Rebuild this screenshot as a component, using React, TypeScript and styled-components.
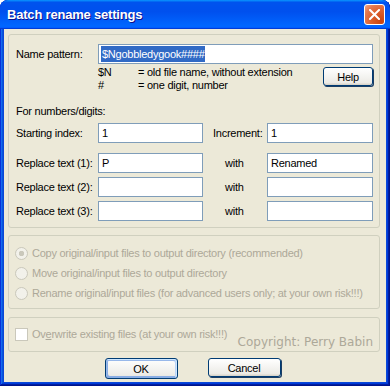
import styled, { createGlobalStyle } from 'styled-components';

const GlobalStyle = createGlobalStyle`
  html, body {
    margin: 0;
    padding: 0;
    background: #ffffff;
  }
  body {
    font-family: Tahoma, "Liberation Sans", Arial, sans-serif;
    font-size: 11px;
    letter-spacing: -0.25px;
    color: #000000;
  }
`;

// Окно диалога целиком
const Window = styled.div`
  box-sizing: border-box;
  width: 390px;
  height: 386px;
  display: flex;
  flex-direction: column;
  background: #0a48d8;
  border-radius: 8px 8px 0 0;
  box-shadow: inset -1px -1px #00138c, inset 1px 1px #0831d9,
    inset -2px -2px #001ea0, inset 2px 2px #166aee,
    inset -3px -3px #003bda, inset 3px 3px #0855dd;
  overflow: hidden;
`;

// Синяя полоса заголовка
const TitleBar = styled.div`
  height: 29px;
  flex-shrink: 0;
  display: flex;
  align-items: center;
  justify-content: space-between;
  padding: 0 5px 0 7px;
  border-radius: 8px 8px 0 0;
  background: linear-gradient(
    180deg,
    #0997ff,
    #0053ee 8%,
    #0050ee 40%,
    #0066ff 88%,
    #0066ff 93%,
    #005bff 95%,
    #003dd7 96%,
    #003dd7
  );
`;

const TitleText = styled.span`
  font-family: "Liberation Sans", Arial, sans-serif;
  font-weight: bold;
  font-size: 13px;
  letter-spacing: -0.2px;
  color: #ffffff;
  text-shadow: 1px 1px #0f1089;
`;

const CloseButton = styled.div`
  width: 21px;
  height: 21px;
  box-sizing: border-box;
  border: 1px solid #ffffff;
  border-radius: 3px;
  background: radial-gradient(
    circle at 85% 85%,
    #c94310 0%,
    #dc5f2c 45%,
    #e67a4f 75%,
    #f2a88a 100%
  );
  display: flex;
  align-items: center;
  justify-content: center;
`;

// Серая клиентская область
const Client = styled.div`
  flex: 1;
  margin: 0 4px 4px 4px;
  background: #ece9d8;
  padding: 5px 6px 0 4px;
  display: flex;
  flex-direction: column;
  white-space: nowrap;
`;

const Group = styled.div<{ $mt?: number; $pad: string }>`
  border: 1px solid #d0d0bf;
  border-radius: 3px;
  margin-top: ${(p) => p.$mt ?? 0}px;
  padding: ${(p) => p.$pad};
  display: flex;
  flex-direction: column;
`;

// Строка сетки: подпись, поле, подпись, поле
const FormRow = styled.div<{ $mt?: number }>`
  display: grid;
  grid-template-columns: 82px 105px 64px 106px;
  align-items: center;
  margin-top: ${(p) => p.$mt ?? 0}px;
`;

const Label = styled.span<{ $indent?: number }>`
  padding-left: ${(p) => p.$indent ?? 0}px;
`;

const TextBox = styled.div<{ $span?: boolean }>`
  box-sizing: border-box;
  height: 20px;
  border: 1px solid #7f9db9;
  background: #ffffff;
  padding: 0 3px;
  display: flex;
  align-items: center;
  overflow: hidden;
  grid-column: ${(p) => (p.$span ? '2 / 5' : 'auto')};
`;

const Selected = styled.span`
  background: #316ac5;
  color: #ffffff;
  line-height: 16px;
  margin-left: -1px;
  padding-left: 1px;
`;

const HintRow = styled.div`
  display: grid;
  grid-template-columns: 82px 1fr auto;
  margin-top: 2px;
  height: 26px;
`;

const HintList = styled.div`
  grid-column: 2;
  display: grid;
  grid-template-columns: 40px auto;
  line-height: 13px;
`;

const SectionNote = styled.div`
  margin-top: 12px;
  line-height: 14px;
`;

const XpButton = styled.button<{ $default?: boolean; $w: number }>`
  box-sizing: border-box;
  width: ${(p) => p.$w}px;
  height: ${(p) => (p.$default ? 21 : 19)}px;
  padding: 0;
  font-family: Tahoma, "Liberation Sans", Arial, sans-serif;
  font-size: 11px;
  letter-spacing: -0.25px;
  color: #000000;
  border: 1px solid #003c74;
  border-radius: 3px;
  background: linear-gradient(180deg, #ffffff, #ecebe6 86%, #d6d0c5);
  box-shadow: ${(p) =>
    p.$default
      ? 'inset -1px 1px #cee7ff, inset 1px 2px #98b8ea, inset -2px 2px #bcd4f6, inset 1px -1px #89ade4, inset 2px -2px #89ade4'
      : '1px 1px 0 #1c3d63'};
`;

const HelpButton = styled(XpButton)`
  margin-top: 1px;
`;

const RadioRow = styled.div`
  height: 20px;
  display: flex;
  align-items: center;
  gap: 4px;
  color: #aca899;
`;

const Radio = styled.span<{ $checked?: boolean }>`
  box-sizing: border-box;
  flex: none;
  width: 13px;
  height: 13px;
  border-radius: 50%;
  border: 1px solid #cac8bb;
  background: ${(p) =>
    p.$checked
      ? 'radial-gradient(circle, #cac8bb 0 2.5px, #f2f1ea 3px)'
      : '#f2f1ea'};
`;

const CheckRow = styled.div`
  display: flex;
  justify-content: space-between;
  height: 24px;
`;

const CheckLabel = styled.div`
  display: flex;
  align-items: center;
  gap: 4px;
  height: 14px;
  color: #aca899;
`;

const CheckBox = styled.span`
  box-sizing: border-box;
  flex: none;
  width: 13px;
  height: 13px;
  border: 1px solid #cac8bb;
  background: #ffffff;
`;

const Copyright = styled.span`
  align-self: flex-end;
  font-family: "DejaVu Sans", Verdana, sans-serif;
  font-size: 12px;
  letter-spacing: 0;
  line-height: 16px;
  color: #aca899;
  margin-bottom: 1px;
`;

const ButtonBar = styled.div`
  margin-top: 6px;
  display: flex;
  justify-content: center;
  gap: 30px;
  padding-right: 3px;
`;

function App() {
  return (
    <>
      <GlobalStyle />
      <Window>
        <TitleBar>
          <TitleText>Batch rename settings</TitleText>
          <CloseButton>
            <svg width="11" height="11" viewBox="0 0 11 11">
              <path d="M1 1 L10 10 M10 1 L1 10" stroke="#ffffff" strokeWidth="2" strokeLinecap="square" />
            </svg>
          </CloseButton>
        </TitleBar>
        <Client>
          <Group $pad="9px 6px 6px 7px">
            <FormRow>
              <Label>Name pattern:</Label>
              <TextBox $span>
                <Selected>$Ngobbledygook####</Selected>
              </TextBox>
            </FormRow>
            <HintRow>
              <HintList>
                <span>$N</span>
                <span>= old file name, without extension</span>
                <span>#</span>
                <span>= one digit, number</span>
              </HintList>
              <HelpButton $w={50}>Help</HelpButton>
            </HintRow>
            <SectionNote>For numbers/digits:</SectionNote>
            <FormRow $mt={5}>
              <Label>Starting index:</Label>
              <TextBox>1</TextBox>
              <Label $indent={10}>Increment:</Label>
              <TextBox>1</TextBox>
            </FormRow>
            <FormRow $mt={10}>
              <Label>Replace text (1):</Label>
              <TextBox>P</TextBox>
              <Label $indent={22}>with</Label>
              <TextBox>Renamed</TextBox>
            </FormRow>
            <FormRow $mt={4}>
              <Label>Replace text (2):</Label>
              <TextBox />
              <Label $indent={22}>with</Label>
              <TextBox />
            </FormRow>
            <FormRow $mt={4}>
              <Label>Replace text (3):</Label>
              <TextBox />
              <Label $indent={22}>with</Label>
              <TextBox />
            </FormRow>
          </Group>

          <Group $mt={7} $pad="7px 6px 5px 6px">
            <RadioRow>
              <Radio $checked />
              Copy original/input files to output directory (recommended)
            </RadioRow>
            <RadioRow>
              <Radio />
              Move original/input files to output directory
            </RadioRow>
            <RadioRow>
              <Radio />
              Rename original/input files (for advanced users only; at your own risk!!!)
            </RadioRow>
          </Group>

          <Group $mt={8} $pad="9px 6px 0 6px">
            <CheckRow>
              <CheckLabel>
                <CheckBox />
                <span>
                  Ov<u>e</u>rwrite existing files (at your own risk!!!)
                </span>
              </CheckLabel>
              <Copyright>Copyright: Perry Babin</Copyright>
            </CheckRow>
          </Group>

          <ButtonBar>
            <XpButton $default $w={73}>OK</XpButton>
            <XpButton $w={73}>Cancel</XpButton>
          </ButtonBar>
        </Client>
      </Window>
    </>
  );
}

export default App;
